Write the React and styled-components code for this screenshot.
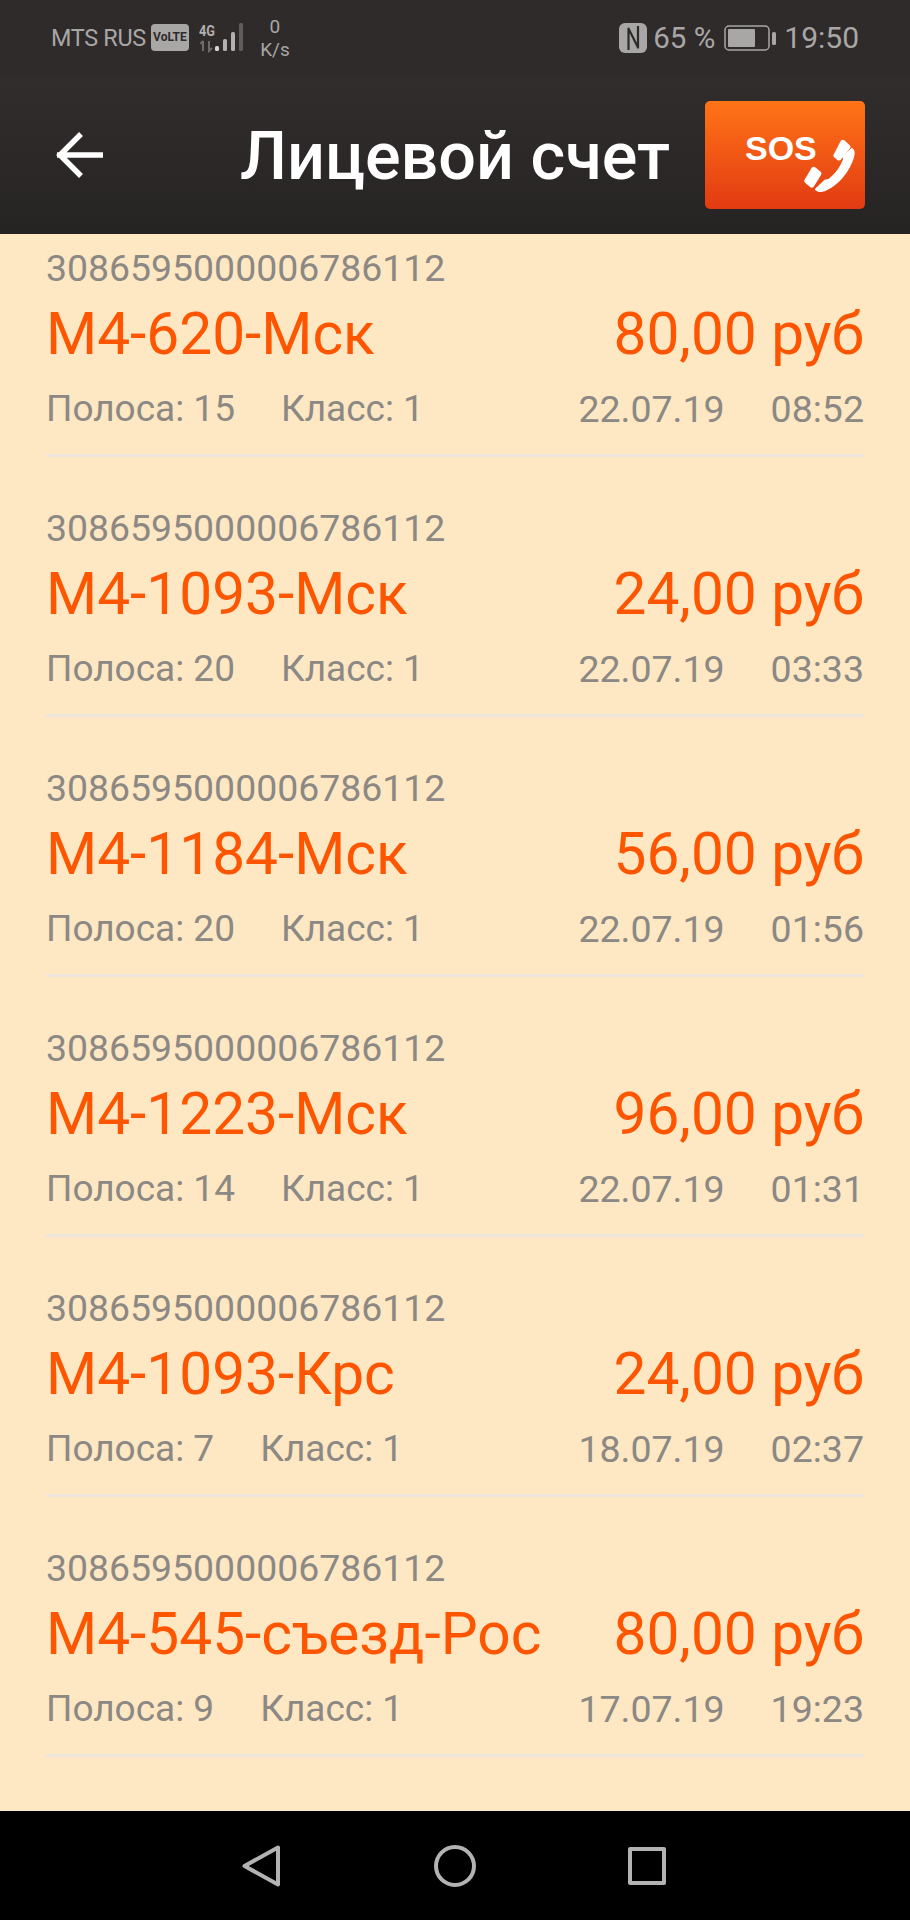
import React from 'react'
import styled, { createGlobalStyle } from 'styled-components'

const rows = [
  { route: 'М4-620-Мск', price: '80,00 руб', lane: 15, date: '22.07.19', time: '08:52' },
  { route: 'М4-1093-Мск', price: '24,00 руб', lane: 20, date: '22.07.19', time: '03:33' },
  { route: 'М4-1184-Мск', price: '56,00 руб', lane: 20, date: '22.07.19', time: '01:56' },
  { route: 'М4-1223-Мск', price: '96,00 руб', lane: 14, date: '22.07.19', time: '01:31' },
  { route: 'М4-1093-Крс', price: '24,00 руб', lane: 7, date: '18.07.19', time: '02:37' },
  { route: 'М4-545-съезд-Рос', price: '80,00 руб', lane: 9, date: '17.07.19', time: '19:23' },
]

function App() {
  return (
    <Screen>
      <GlobalStyle />
      <StatusBar>
        <StatusGroup>
          <Carrier>MTS RUS</Carrier>
          <Volte>VoLTE</Volte>
          <SignalIcon />
          <Speed>
            <span>0</span>
            <span>K/s</span>
          </Speed>
        </StatusGroup>
        <StatusGroup>
          <NfcIcon />
          <StatusText>65 %</StatusText>
          <BatteryIcon />
          <Clock>19:50</Clock>
        </StatusGroup>
      </StatusBar>
      <Header>
        <BackButton>
          <svg width="48" height="46" viewBox="0 0 48 46" fill="none" stroke="#fff" strokeWidth="5.5">
            <path d="M1 23H47M25 2L4 23l21 21" />
          </svg>
        </BackButton>
        <Title>Лицевой счет</Title>
        <SosButton>
          <SosLabel>SOS</SosLabel>
          <PhoneIcon width="53" height="54" viewBox="0 2 50 52" fill="#fff">
            <path d="M36 4.500c1-1 2.500-1 3.500 0l5 4.500c1 1 1 2.200 0 3.200L36 23c-1 1-2.500 1-3.500 .2l-3-2.600c-1-1-1-2.200-.2-3.200z" />
            <path d="M46.500 11.500c2.500 1.800 3 3.600 2.600 6.500C47 30 36 47 21 53c-4 1.500-7.500 1.200-9.500-.8l-.8-.8 9.800-9.500c2 .4 3.500-.2 5.500-2 5-4.500 9-10 11.500-16 .8-1.800.6-3.200-.3-4.400z" />
            <path d="M8 30.500c1-1 2.300-1.200 3.500-.2l5 4.300c1 1 1 2.200 .2 3.200L9.800 49c-1 1-2.300 1.200-3.500 .2l-4.800-4c-1-1-1.200-2.300-.2-3.400z" />
          </PhoneIcon>
        </SosButton>
      </Header>
      <List>
        {rows.map((row, i) => (
          <Row key={i}>
            <Code>3086595000006786112</Code>
            <MainLine>
              <span>{row.route}</span>
              <span>{row.price}</span>
            </MainLine>
            <MetaLine>
              <MetaGroup $size={37}>
                <span>Полоса: {row.lane}</span>
                <span>Класс: 1</span>
              </MetaGroup>
              <MetaGroup $size={37.5}>
                <span>{row.date}</span>
                <span>{row.time}</span>
              </MetaGroup>
            </MetaLine>
          </Row>
        ))}
      </List>
      <NavBar>
        <svg width="40" height="42" viewBox="0 0 40 42" fill="none" stroke="#b3b3b3" strokeWidth="4" strokeLinejoin="round">
          <path d="M36 2.500V39.500L2.500 21z" />
        </svg>
        <svg width="42" height="42" viewBox="0 0 42 42" fill="none" stroke="#b3b3b3" strokeWidth="4">
          <circle cx="21" cy="21" r="19" />
        </svg>
        <svg width="38" height="38" viewBox="0 0 38 38" fill="none" stroke="#b3b3b3" strokeWidth="4" strokeLinejoin="round">
          <rect x="2" y="2" width="34" height="34" />
        </svg>
      </NavBar>
    </Screen>
  )
}

function SignalIcon() {
  return (
    <SignalSvg width="46" height="30" viewBox="0 0 46 30">
      <text x="0" y="13" fontFamily="Roboto, sans-serif" fontWeight="700" fontSize="15" fill="#b3b0ae" textLength="16" lengthAdjust="spacingAndGlyphs">4G</text>
      <path d="M4 18v10M1.500 21L4 18M10 18v10l3-3" stroke="#6d6a69" strokeWidth="2" fill="none" />
      <rect x="16" y="23" width="4" height="5" rx="1.500" fill="#d8d6d5" />
      <rect x="24" y="16" width="4" height="12" rx="1.500" fill="#b3b0ae" />
      <rect x="32" y="9" width="4" height="19" rx="1.500" fill="#b3b0ae" />
      <rect x="40" y="0" width="4" height="28" rx="1.500" fill="#5f5c5b" />
    </SignalSvg>
  )
}

function NfcIcon() {
  return (
    <svg width="28" height="30" viewBox="0 0 28 30">
      <rect width="28" height="30" rx="6" fill="#a9a7a6" />
      <path d="M9.500 27V5.500L19 24.500V3" stroke="#2f2b2b" strokeWidth="2.200" fill="none" strokeLinejoin="round" />
    </svg>
  )
}

function BatteryIcon() {
  return (
    <svg width="52" height="26" viewBox="0 0 52 26">
      <rect x="1" y="1" width="44" height="24" rx="4" fill="none" stroke="#a9a7a6" strokeWidth="1.500" />
      <rect x="4" y="4" width="27" height="18" rx="1" fill="#a9a7a6" />
      <rect x="48" y="7" width="4" height="13" rx="1.500" fill="#a9a7a6" />
    </svg>
  )
}

export default App

const GlobalStyle = createGlobalStyle`
  html, body {
    margin: 0;
    padding: 0;
  }
  body {
    font-family: Roboto, "Liberation Sans", sans-serif;
    background: #fee7c3;
  }
`

const Screen = styled.div`
  width: 910px;
  height: 1920px;
  display: flex;
  flex-direction: column;
  overflow: hidden;
  background: #fee7c3;
`

const StatusBar = styled.div`
  height: 75px;
  flex: none;
  box-sizing: border-box;
  padding: 0 51px;
  display: flex;
  align-items: center;
  justify-content: space-between;
  background: #2f2b2b;
  color: #a9a7a6;
`

const StatusGroup = styled.div`
  display: flex;
  align-items: center;
`

const Carrier = styled.span`
  font-size: 23.400px;
  letter-spacing: -0.3px;
`

const Volte = styled.span`
  margin-left: 5px;
  width: 38px;
  height: 27px;
  border-radius: 4px;
  background: #a9a7a6;
  color: #2f2b2b;
  font-size: 12px;
  font-weight: 700;
  line-height: 27px;
  text-align: center;
`

const SignalSvg = styled.svg`
  flex: none;
  margin-left: 10px;
`

const Speed = styled.div`
  margin-left: 14px;
  width: 32px;
  display: flex;
  flex-direction: column;
  align-items: center;
  font-size: 19px;
  line-height: 23px;
`

const StatusText = styled.span`
  margin: 0 9px 0 6px;
  font-size: 29.500px;
`

const Clock = styled.span`
  margin-left: 8px;
  font-size: 30px;
`

const Header = styled.div`
  height: 159px;
  flex: none;
  box-sizing: border-box;
  padding: 0 45px;
  display: grid;
  grid-template-columns: 1fr auto 1fr;
  align-items: center;
  background: linear-gradient(#312d2d, #262422);
`

const BackButton = styled.div`
  display: flex;
  padding-left: 11px;
`

const Title = styled.div`
  color: #fff;
  font-size: 66.500px;
  font-weight: 500;
  margin-top: 2px;
`

const SosButton = styled.div`
  position: relative;
  justify-self: end;
  width: 160px;
  height: 108px;
  box-sizing: border-box;
  padding: 30px 0 0 40px;
  border-radius: 5px;
  background: linear-gradient(#ff7417, #e23a12);
  color: #fff;
`

const SosLabel = styled.div`
  font-family: "Liberation Sans", sans-serif;
  font-size: 34px;
  font-weight: 700;
  line-height: 34px;
`

const PhoneIcon = styled.svg`
  position: absolute;
  right: 9px;
  bottom: 17px;
`

const List = styled.div`
  flex: 1;
  padding: 12px 46px 0;
`

const Row = styled.div`
  padding: 49px 0 0;
  height: 260px;
  box-sizing: border-box;
  border-bottom: 3px solid #eee6da;
  &:first-child {
    padding-top: 0;
    height: 211px;
  }
`

const Code = styled.div`
  color: #8c8883;
  font-size: 37.400px;
  line-height: 44px;
`

const MainLine = styled.div`
  display: flex;
  justify-content: space-between;
  margin-top: 10px;
  color: #fd5500;
  font-size: 58.600px;
  line-height: 68px;
`

const MetaLine = styled.div`
  display: flex;
  justify-content: space-between;
  margin-top: 19px;
  color: #8c8883;
  line-height: 44px;
`

const MetaGroup = styled.div`
  display: flex;
  gap: 46px;
  font-size: ${props => props.$size}px;
`

const NavBar = styled.div`
  height: 109px;
  flex: none;
  box-sizing: border-box;
  padding: 0 244px 0 242px;
  display: flex;
  align-items: center;
  justify-content: space-between;
  background: #000;
`
